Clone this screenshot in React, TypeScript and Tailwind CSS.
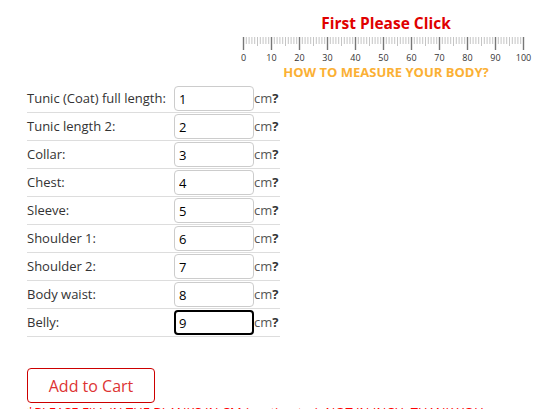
import React from "react";

const rows = [
  { label: "Tunic (Coat) full length:", value: "1" },
  { label: "Tunic length 2:", value: "2" },
  { label: "Collar:", value: "3" },
  { label: "Chest:", value: "4" },
  { label: "Sleeve:", value: "5" },
  { label: "Shoulder 1:", value: "6" },
  { label: "Shoulder 2:", value: "7" },
  { label: "Body waist:", value: "8" },
  { label: "Belly:", value: "9" },
];

function Ruler() {
  const ticks = [];
  for (let i = 0; i <= 100; i++) {
    const x = 3.5 + i * 2.8;
    const major = i % 10 === 0;
    const half = i % 5 === 0;
    ticks.push(
      <line
        key={i}
        x1={x}
        x2={x}
        y1={2}
        y2={major ? 15 : half ? 11 : 9}
        stroke={major ? "#777" : "#c4c4c4"}
        strokeWidth={major ? 1.4 : 1}
      />
    );
  }
  return (
    <svg width="292" height="28" viewBox="0 0 292 28">
      {ticks}
      {Array.from({ length: 11 }).map((_, k) => (
        <text
          key={k}
          x={3.5 + k * 28}
          y={26}
          fontSize="9"
          textAnchor="middle"
          fill="#333"
          fontFamily="'Open Sans', sans-serif"
        >
          {k * 10}
        </text>
      ))}
    </svg>
  );
}

export default function App() {
  return (
    <div className="h-screen bg-white font-['Open_Sans',sans-serif] text-[13px] text-[#333] overflow-hidden">
      {/* measure header */}
      <div className="ml-[236px] w-[300px] pt-[13px] flex flex-col items-center">
        <div className="text-[15.5px] font-bold text-[#e00000] leading-[20px]">
          First Please Click
        </div>
        <div className="mt-[2px]">
          <Ruler />
        </div>
        <div className="text-[13px] font-bold text-[#fbb034] leading-[15px] mt-[2px]">
          HOW TO MEASURE YOUR BODY?
        </div>
      </div>

      <div className="ml-[27px] mt-[5px] w-[253px]">
        {rows.map((r, i) => (
          <div
            key={r.label}
            className="flex items-center h-[28px] border-b border-[#ddd]"
          >
            <div className="w-[147px] whitespace-nowrap">{r.label}</div>
            <input
              defaultValue={r.value}
              className={
                i === rows.length - 1
                  ? "w-[80px] h-[25px] px-[3px] rounded-[4px] border-2 border-black text-[13px] text-black outline-none"
                  : "w-[80px] h-[25px] px-[4px] rounded-[4px] border border-[#ccc] text-[13px] text-black outline-none"
              }
            />
            <span className="text-[#555]">
              cm<b className="text-[#333]">?</b>
            </span>
          </div>
        ))}
      </div>

      <button className="ml-[27px] mt-[31px] w-[128px] h-[35px] rounded-[4px] border border-[#cc0000] bg-white text-[16px] text-[#d33] font-['Open_Sans',sans-serif]">
        Add to Cart
      </button>
      <div className="ml-[27px] mt-[1px] whitespace-nowrap text-[13px] text-[#f00] leading-[16px]">
        *PLEASE FILL IN THE BLANKS IN CM (centimeter). NOT IN INCH. THANK YOU
      </div>
    </div>
  );
}
